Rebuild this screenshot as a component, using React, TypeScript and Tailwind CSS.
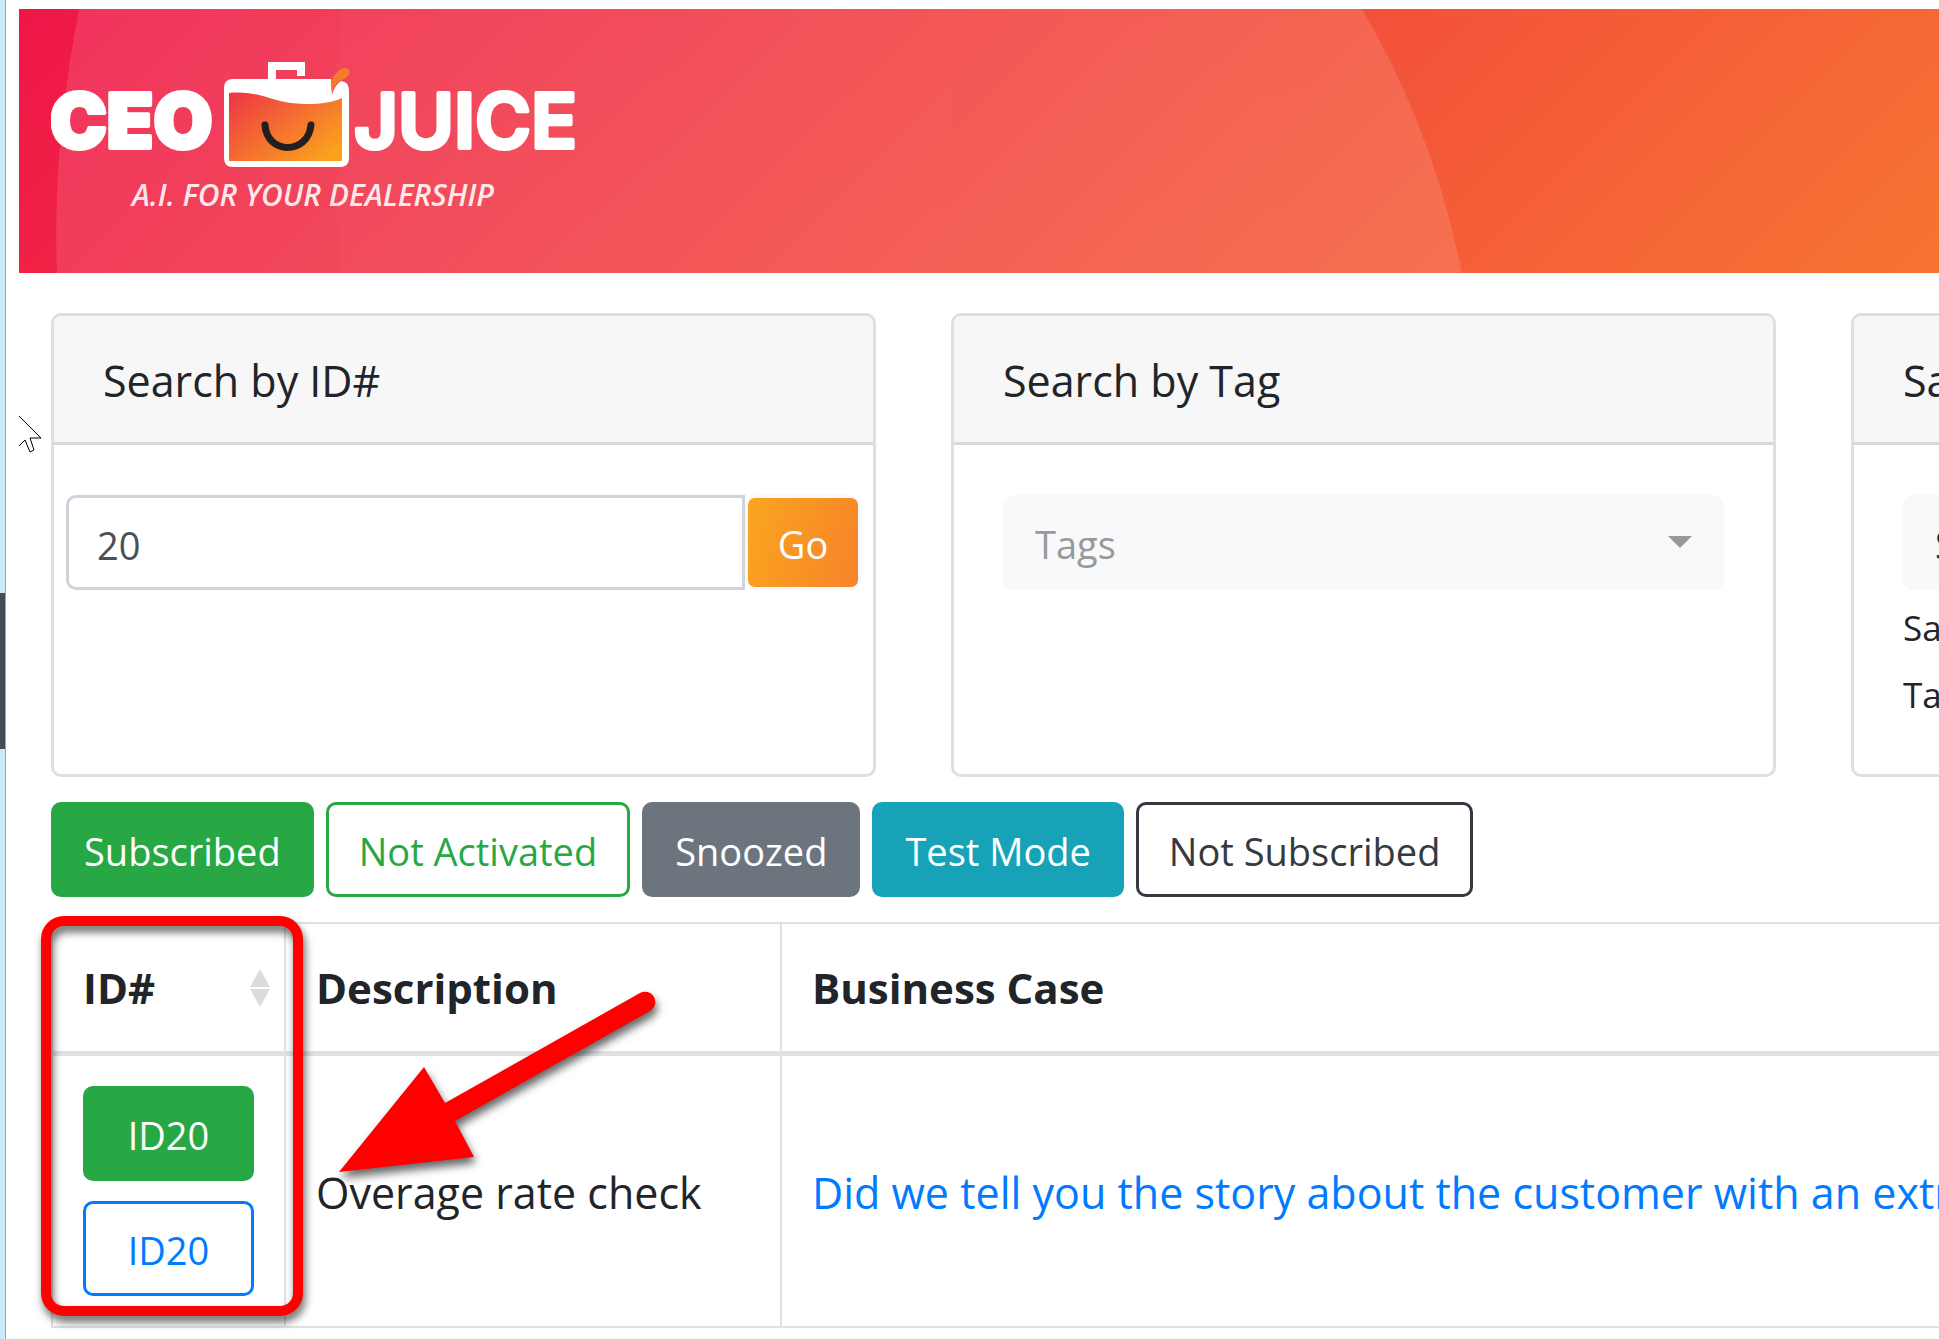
import { useState } from 'react';
import type { ReactNode } from 'react';

const STATUS_FILTERS = [
  { label: 'Subscribed', style: 'border-[#28a745] bg-[#28a745] text-white' },
  { label: 'Not Activated', style: 'border-[#28a745] bg-white text-[#28a745]' },
  { label: 'Snoozed', style: 'border-[#6c757d] bg-[#6c757d] text-white' },
  { label: 'Test Mode', style: 'border-[#17a2b8] bg-[#17a2b8] text-white' },
  { label: 'Not Subscribed', style: 'border-[#343a40] bg-white text-[#343a40]' },
];

function Logo() {
  return (
    <svg width="528" height="154" viewBox="51 60 528 154" role="img" aria-label="CEO Juice">
      <defs>
        <linearGradient id="juice" x1="0" y1="0" x2="1" y2="0.8">
          <stop offset="0" stopColor="#ee3344" />
          <stop offset="0.5" stopColor="#f46c32" />
          <stop offset="1" stopColor="#fba21c" />
        </linearGradient>
      </defs>
      <g fill="#fff" stroke="#fff" strokeLinejoin="round" className="font-['Inter']">
        <text x="50" y="148" fontSize="76" fontWeight="900" strokeWidth="4">CEO</text>
        <text x="354" y="148" fontSize="76" fontWeight="600" strokeWidth="4">JUICE</text>
      </g>
      <path
        d="M233 79 H331 L332 95 Q334 86 341 81 Q349 82 349 90 V158 Q349 167 340 167 H233 Q224 167 224 158 V88 Q224 79 233 79 Z"
        fill="#fff"
      />
      <path d="M268 80 V62 H305 V76 H297 V70 H276 V80 Z" fill="#fff" />
      <path d="M229 93 C262 90 272 104 305 104 C322 104 333 102 342 98 V161 H229 Z" fill="url(#juice)" />
      <path d="M331 87 C330 76 341 67 346 68 C352 69 350 77 344 79 C338 81 334 86 332 92 Z" fill="#f47a2c" />
      <path d="M265 125 C267 155 308 155 311 125" fill="none" stroke="#231f20" strokeWidth="7" strokeLinecap="round" />
      <text x="132" y="206" fontSize="30" fontWeight="600" fontStyle="italic" fill="#fff" fillOpacity="0.9" className="font-['Open_Sans']">
        A.I. FOR YOUR DEALERSHIP
      </text>
    </svg>
  );
}

function HeaderWaves() {
  return (
    <svg className="absolute inset-y-0 left-0" width="1450" height="264" viewBox="0 0 1450 264" aria-hidden="true">
      <defs>
        <linearGradient id="fade" x1="0" y1="0" x2="1" y2="0">
          <stop offset="0" stopColor="#fff" stopOpacity="0.02" />
          <stop offset="1" stopColor="#fff" stopOpacity="0" />
        </linearGradient>
      </defs>
      <path d="M60 0 Q33 140 38 264 H1443 Q1413 118 1343 0 Z" fill="#fff" fillOpacity="0.12" />
      <path d="M323 0 Q308 132 323 264 H1443 Q1413 118 1343 0 Z" fill="url(#fade)" />
    </svg>
  );
}

function Card({ title, children }: { title: string; children: ReactNode }) {
  return (
    <section className="flex min-h-[464px] flex-col rounded-[10px] border-3 border-[#dfdfdf] bg-white">
      <h2 className="rounded-t-[7px] border-b-3 border-[#d8d8d8] bg-[#f7f7f7] px-[49px] pt-8 pb-7 text-[43px] leading-[66px]">
        {title}
      </h2>
      {children}
    </section>
  );
}

function TagSelect({ label, value, tone }: { label: string; value: string; tone: string }) {
  return (
    <div className="relative">
      <select
        aria-label={label}
        className={`h-[95px] w-full appearance-none rounded-[10px] bg-[#f8f9fb] px-8 pt-1 text-[38px] ${tone}`}
      >
        <option>{value}</option>
      </select>
      <svg className="pointer-events-none absolute top-[41px] right-8" width="24" height="12" viewBox="0 0 24 12" aria-hidden="true">
        <path d="M0 0 H24 L12 12 Z" fill="#999" />
      </svg>
    </div>
  );
}

function SortIcon() {
  return (
    <svg width="20" height="38" viewBox="0 0 20 38" aria-hidden="true">
      <path d="M10 0 L20 18 H0 Z M0 20 H20 L10 38 Z" fill="#dcdcdc" />
    </svg>
  );
}

// Highlight frame and arrow that point at the ID column
function Annotations() {
  return (
    <svg
      className="pointer-events-none absolute top-0 left-0 drop-shadow-[2px_6px_4px_rgba(0,0,0,0.6)]"
      width="700"
      height="1339"
      viewBox="0 0 700 1339"
      aria-hidden="true"
    >
      <rect x="46" y="921" width="252" height="390" rx="18" fill="none" stroke="#f00" strokeWidth="10" />
      <path d="M339 1172 L424 1067 L445 1103 L640 993 A10 10 0 0 1 650 1011 L455 1121 L474 1157 Z" fill="#f00" />
    </svg>
  );
}

function Pointer() {
  return (
    <svg className="pointer-events-none absolute top-[415px] left-[18px]" width="26" height="40" viewBox="0 0 26 40" aria-hidden="true">
      <path d="M1 1 L23 23 H12 L16 35 L12 37 L7 25 L1 31" fill="none" stroke="#000" strokeWidth="1" />
    </svg>
  );
}

export default function App() {
  const [searchId, setSearchId] = useState('20');

  return (
    <div className="relative flex min-h-screen overflow-hidden bg-white font-['Open_Sans',sans-serif] text-[#212529]">
      <div className="flex w-[6px] shrink-0 flex-col border-r border-[#8fa9b8] bg-[#cdeafc]">
        <div className="mt-[593px] h-[156px] bg-[#424e54]" />
      </div>

      <div className="min-w-0 flex-1 pt-[9px]">
        <header className="relative ml-[13px] h-[264px] bg-linear-[135deg] from-[#ef1648] to-[#f67432] pt-[51px] pl-8">
          <HeaderWaves />
          <a href="#" className="relative block">
            <Logo />
          </a>
        </header>

        <main className="ml-[45px] min-w-[2625px] pt-10">
          <div className="grid grid-cols-3 gap-[75px]">
            <Card title="Search by ID#">
              <form className="flex px-3 pt-[50px]" onSubmit={(e) => e.preventDefault()}>
                <input
                  type="text"
                  aria-label="Search by ID#"
                  value={searchId}
                  onChange={(e) => setSearchId(e.target.value)}
                  className="h-[95px] min-w-0 flex-1 rounded-l-[10px] border-3 border-[#ced4da] px-7 pt-1 text-[38px] text-[#495057]"
                />
                <button
                  type="submit"
                  className="h-[95px] w-[116px] rounded-[10px] border-3 border-[#f8f9fa] bg-linear-[105deg] from-[#faa61f] to-[#f7822a] bg-origin-border pt-1 text-[38px] text-white"
                >
                  Go
                </button>
              </form>
            </Card>

            <Card title="Search by Tag">
              <div className="px-[49px] pt-[50px]">
                <TagSelect label="Tags" value="Tags" tone="text-[#999]" />
              </div>
            </Card>

            <Card title="Saved Searches">
              <div className="px-[49px] pt-[50px]">
                <TagSelect label="Saved searches" value="Select" tone="text-[#212529]" />
                <p className="pt-1 text-[35px] leading-[67px]">Saved</p>
                <p className="text-[35px] leading-[67px]">Tags</p>
              </div>
            </Card>
          </div>

          <div className="flex gap-3 py-[25px]">
            {STATUS_FILTERS.map((filter) => (
              <button
                key={filter.label}
                className={`h-[95px] rounded-[10px] border-3 px-[30px] pt-1 text-[38px] whitespace-nowrap ${filter.style}`}
              >
                {filter.label}
              </button>
            ))}
          </div>

          <table className="w-full table-fixed border-collapse border-2 border-[#dee2e6] text-left">
            <colgroup>
              <col className="w-[233px]" />
              <col className="w-[496px]" />
              <col />
            </colgroup>
            <thead>
              <tr className="border-b-5 border-[#dee2e6] text-[42px] leading-[67px]">
                <th className="border-r-2 border-[#dee2e6] py-[30px] pr-[14px] pl-[30px] font-bold">
                  <div className="flex items-center justify-between">
                    ID#
                    <SortIcon />
                  </div>
                </th>
                <th className="border-r-2 border-[#dee2e6] p-[30px] font-bold">Description</th>
                <th className="p-[30px] font-bold">Business Case</th>
              </tr>
            </thead>
            <tbody>
              <tr className="text-[43px]">
                <td className="border-r-2 border-[#dee2e6] p-[30px]">
                  <div className="flex flex-col gap-5 text-[38px]">
                    <button className="h-[95px] rounded-[10px] border-3 border-[#28a745] bg-[#28a745] pt-1 text-white">ID20</button>
                    <button className="h-[95px] rounded-[10px] border-3 border-[#007bff] bg-white pt-1 text-[#007bff]">ID20</button>
                  </div>
                </td>
                <td className="border-r-2 border-[#dee2e6] px-[30px] pt-1 whitespace-nowrap">Overage rate check</td>
                <td className="px-[30px] pt-1 whitespace-nowrap">
                  <a href="#" className="text-[#007bff]">
                    Did we tell you the story about the customer with an extra
                  </a>
                </td>
              </tr>
            </tbody>
          </table>
        </main>
      </div>

      <Annotations />
      <Pointer />
    </div>
  );
}
